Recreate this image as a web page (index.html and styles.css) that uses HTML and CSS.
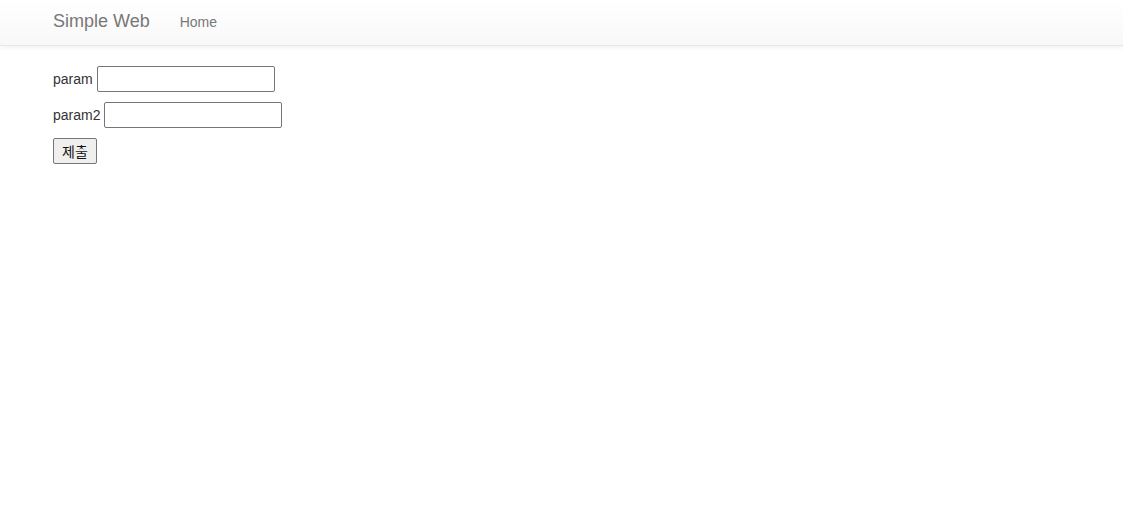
FILE: index.html
```html
<!DOCTYPE html>
<html lang="ko">
<head>
    <meta charset="UTF-8">
    <meta name="viewport" content="width=device-width, initial-scale=1.0">
    <title>Simple Web</title>
    <link rel="stylesheet" href="styles.css">
</head>
<body>
    <nav class="navbar">
        <div class="container nav-inner">
            <a class="brand" href="#">Simple Web</a>
            <a class="nav-link" href="#">Home</a>
        </div>
    </nav>

    <div class="container">
        <form class="form">
            <div class="row">
                <label for="param">param</label>
                <input type="text" id="param" name="param">
            </div>
            <div class="row">
                <label for="param2">param2</label>
                <input type="text" id="param2" name="param2">
            </div>
            <div class="row">
                <button type="submit">제출</button>
            </div>
        </form>
    </div>
</body>
</html>
```

FILE: styles.css
```css
body {
    margin: 0;
    font-family: "Liberation Sans", Arial, "Noto Sans CJK KR", sans-serif;
    font-size: 14px;
    color: #333;
    background: #fff;
}
.container {
    padding: 0 53px;
}
.navbar {
    height: 45px;
    background-image: linear-gradient(to bottom, #fff 0, #f8f8f8 100%);
    border-bottom: 1px solid #e7e7e7;
    box-shadow: 0 1px 5px rgba(0, 0, 0, .075);
    margin-bottom: 20px;
}
.nav-inner {
    display: flex;
    align-items: center;
    height: 100%;
    gap: 30px;
}
.brand {
    font-size: 18px;
    color: #777;
    text-decoration: none;
    position: relative;
    top: -1px;
}
.nav-link {
    color: #777;
    text-decoration: none;
    position: relative;
    top: -1px;
}
.form {
    display: flex;
    flex-direction: column;
    gap: 10px;
}
.row {
    display: flex;
    align-items: center;
    gap: 4px;
}
input {
    width: 178px;
    height: 26px;
    box-sizing: border-box;
    border: 1px solid #767676;
    border-radius: 2px;
    padding: 1px 2px;
    font: inherit;
}
button {
    height: 26px;
    width: 44px;
    padding: 0;
    font: inherit;
    color: #111;
    background: #efefef;
    border: 1px solid #767676;
    border-radius: 2px;
}
```
